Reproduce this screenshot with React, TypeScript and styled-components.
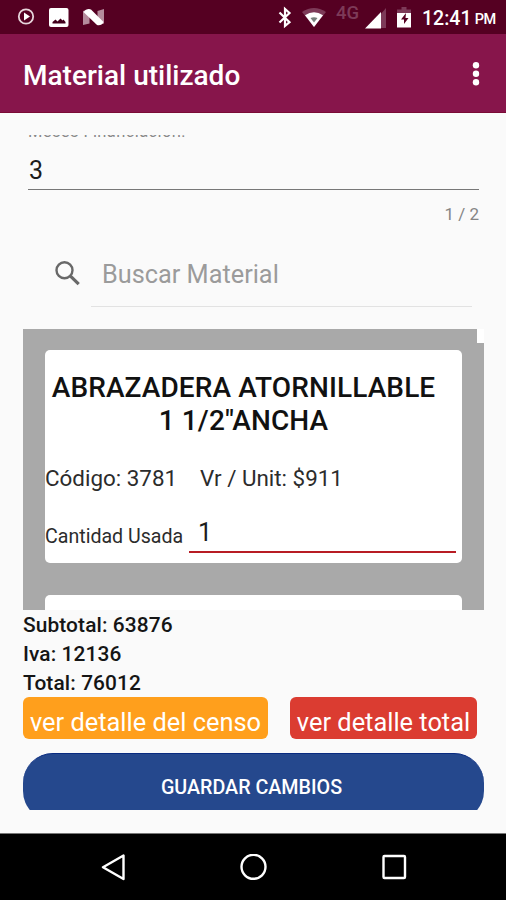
import React from 'react';
import styled, { createGlobalStyle } from 'styled-components';

const GlobalStyle = createGlobalStyle`
  * { box-sizing: border-box; }
  body { margin: 0; background: #fafafa; font-family: Roboto, sans-serif; color: #1c1c1c; }
  svg { display: block; flex: none; }
`;

const Screen = styled.div`
  width: 506px;
  height: 900px;
  display: flex;
  flex-direction: column;
  overflow: hidden;
  background: #fafafa;
  white-space: nowrap;
`;

const StatusBar = styled.header`
  height: 34px;
  flex: none;
  display: flex;
  justify-content: space-between;
  background: #550022;
  color: #fff;
  padding: 0 10px 0 17px;
`;

const StatusGroup = styled.div<{ $gap: number }>`
  display: flex;
  gap: ${p => p.$gap}px;
  height: 34px;
`;

const Network = styled.span`
  width: 19px;
  font-size: 18.5px;
  font-weight: 500;
  line-height: 26px;
  color: #7d3a58;
`;

const Clock = styled.time`
  width: 74px;
  font-size: 19.5px;
  font-weight: 500;
  line-height: 38px;
  display: flex;
  justify-content: space-between;
`;

const Meridiem = styled.small`
  font-size: 14.5px;
  letter-spacing: -0.3px;
  line-height: 40px;
`;

const AppBar = styled.div`
  height: 79px;
  flex: none;
  display: flex;
  align-items: center;
  justify-content: space-between;
  padding: 0 26px 0 23px;
  background: #87154b;
  border-bottom: 1px solid #7a0b35;
`;

const Title = styled.h1`
  margin: 5px 0 0;
  font-size: 28px;
  font-weight: 500;
  line-height: 32px;
  color: #fff;
`;

const Content = styled.main`
  height: 720px;
  flex: none;
  padding: 22px 22px 0 23px;
`;

const TermField = styled.section`
  margin: 0 5px;
  height: 92px;
`;

const ClippedLabel = styled.div`
  height: 2px;
  margin-bottom: 1px;
  overflow: hidden;
  display: flex;
  align-items: flex-end;
  font-size: 16.5px;
  line-height: 11px;
  letter-spacing: 0.4px;
  color: #888;
`;

const TermValue = styled.div`
  height: 52px;
  padding: 17px 0 0 1px;
  font-size: 25px;
  line-height: 32px;
  border-bottom: 1.5px solid #777;
`;

const Counter = styled.div`
  padding-top: 13px;
  text-align: right;
  font-size: 17px;
  line-height: 22px;
  color: #858585;
`;

const Search = styled.label`
  height: 80px;
  margin: 0 12px 0 31px;
  display: flex;
  gap: 20px;
`;

const SearchText = styled.span`
  flex: 1;
  height: 80px;
  margin-left: -10px;
  padding: 32px 0 0 11px;
  font-size: 25.3px;
  line-height: 32px;
  color: #9b9b9b;
  border-bottom: 1px solid #e2e2e2;
`;

const MaterialList = styled.section`
  position: relative;
  margin-top: 22px;
  height: 281px;
  overflow: hidden;
  background: #a9a9a9;
  padding: 21px 22px 0;
`;

const ScrollCorner = styled.i`
  position: absolute;
  right: 0;
  top: 0;
  width: 7px;
  height: 14px;
  background: #fff;
`;

const Card = styled.article`
  height: 213px;
  margin-bottom: 32px;
  border-radius: 5px;
  background: #fff;
  overflow: hidden;
`;

const CardTitle = styled.h2`
  margin: 21px 20px 0 0;
  text-align: center;
  font-size: 28px;
  font-weight: 500;
  letter-spacing: 0.1px;
  line-height: 33px;
  color: #111;
`;

const Facts = styled.div`
  display: flex;
  gap: 23px;
  margin-top: 26px;
  font-size: 22.4px;
  line-height: 30px;
  color: #2c2c2c;
`;

const Quantity = styled.div`
  display: flex;
  height: 40px;
  margin-top: 20px;
  padding-right: 6px;
`;

const QuantityLabel = styled.span`
  width: 144px;
  font-size: 19.6px;
  line-height: 48px;
  color: #2c2c2c;
`;

const QuantityValue = styled.span`
  flex: 1;
  padding-left: 9px;
  font-size: 25px;
  line-height: 40px;
  border-bottom: 2px solid #b81c24;
`;

const Totals = styled.div`
  padding-top: 1px;
  height: 87px;
  font-size: 20.9px;
  font-weight: 500;
  letter-spacing: 0.1px;
  line-height: 29px;
  color: #151515;
`;

const DetailActions = styled.div`
  display: flex;
  gap: 22px;
`;

const DetailButton = styled.button<{ $color: string; $width: number }>`
  width: ${p => p.$width}px;
  height: 42px;
  border: 0;
  border-radius: 6px;
  background: ${p => p.$color};
  color: #fff;
  font: 400 25.4px/32px Roboto, sans-serif;
  padding: 9px 0 1px;
`;

const SaveClip = styled.div`
  margin-top: 14px;
  height: 57px;
  overflow: hidden;
`;

const SaveButton = styled.button`
  width: 461px;
  height: 68px;
  padding: 1px 4px 0 0;
  border: 0;
  border-top: 1px solid #082a80;
  border-radius: 30px;
  background: #25488d;
  color: #fff;
  font: 500 19.7px/24px Roboto, sans-serif;
`;

const NavBar = styled.nav`
  height: 67px;
  flex: none;
  display: flex;
  justify-content: space-between;
  padding: 20px 99px 0 100px;
  background: #000;
  border-top: 1px solid #777;
`;

function PlayIcon() {
  return (
    <svg width="18" height="34" fill="none" stroke="#e7d5dc">
      <circle cx="9" cy="16.5" r="7.2" strokeWidth="1.8" />
      <path d="M7 12.5v8l6-4z" fill="#fff" stroke="none" />
    </svg>
  );
}

function PictureIcon() {
  return (
    <svg width="20" height="34">
      <rect y="8" width="19.5" height="19" rx="2" fill="#fff" />
      <path d="M3.500 23.500V22L6.500 19.500 8.500 21.500 11.500 18.500l2 2 1-1 2 2.500v1.500z" fill="#42001c" />
    </svg>
  );
}

function NougatIcon() {
  return (
    <svg width="22" height="34">
      <path d="M0 11 6.500 9v14.500L0 25zM14.500 11 21 9v14.500L14.500 25z" fill="#b58b9c" />
      <path d="M.500 12Q3.500 8 8 9.500L20.500 22Q18.500 26 14 25L1.500 13z" fill="#fff" />
    </svg>
  );
}

function BluetoothIcon() {
  return (
    <svg width="14" height="34" fill="none" stroke="#fff" strokeWidth="2.200">
      <path d="m1.500 12.500 10 9.700-4.500 3.800V9l4.500 4L1.500 22.500" />
    </svg>
  );
}

function WifiIcon() {
  return (
    <svg width="24" height="34">
      <path d="M0 12Q12 4 24 12L12 27z" fill="#7d3a58" />
      <path d="M3 15.200Q12 9.500 21 15.200L12 27z" fill="#fff" />
      <path d="M8.500 18q3.500-1.500 7 0L12 22.500z" fill="#777f7c" />
    </svg>
  );
}

function SignalIcon() {
  return (
    <svg width="22" height="34">
      <path d="M15 15 21 8v20h-6z" fill="#7d3a58" />
      <path d="M0 28.500 16 12v16.500z" fill="#fff" />
    </svg>
  );
}

function BatteryIcon() {
  return (
    <svg width="15" height="34">
      <path d="M0 14V9.500h4.500V7h5v2.500H14V14z" fill="#7d3a58" />
      <path d="M0 13h14V27.500H0z" fill="#fff" />
      <path d="m9 13-5 6.500h3v4.500l4.500-6h-3z" fill="#550022" />
    </svg>
  );
}

function MoreIcon() {
  return (
    <svg width="8" height="26" fill="#fff">
      <circle cx="4" cy="5.200" r="3.200" />
      <circle cx="4" cy="13.700" r="3.200" />
      <circle cx="4" cy="22.200" r="3.200" />
    </svg>
  );
}

function SearchIcon() {
  return (
    <svg width="27" height="80" fill="none" stroke="#686868">
      <circle cx="10.500" cy="43.200" r="8" strokeWidth="2.400" />
      <path d="m16.500 49.200 8.200 8" strokeWidth="3.200" />
    </svg>
  );
}

const totals = [
  ['Subtotal', 63876],
  ['Iva', 12136],
  ['Total', 76012],
];

export default function App() {
  return (
    <Screen>
      <GlobalStyle />
      <StatusBar>
        <StatusGroup $gap={14}>
          <PlayIcon />
          <PictureIcon />
          <NougatIcon />
        </StatusGroup>
        <StatusGroup $gap={10}>
          <BluetoothIcon />
          <WifiIcon />
          <Network>4G</Network>
          <SignalIcon />
          <BatteryIcon />
          <Clock>12:41<Meridiem>PM</Meridiem></Clock>
        </StatusGroup>
      </StatusBar>
      <AppBar>
        <Title>Material utilizado</Title>
        <MoreIcon />
      </AppBar>
      <Content>
        <TermField>
          <ClippedLabel>Meses Financiación:</ClippedLabel>
          <TermValue>3</TermValue>
          <Counter>1 / 2</Counter>
        </TermField>
        <Search>
          <SearchIcon />
          <SearchText>Buscar Material</SearchText>
        </Search>
        <MaterialList>
          <ScrollCorner />
          <Card>
            <CardTitle>ABRAZADERA ATORNILLABLE<br />1 1/2"ANCHA</CardTitle>
            <Facts>
              <span>Código: 3781</span>
              <span>Vr / Unit: $911</span>
            </Facts>
            <Quantity>
              <QuantityLabel>Cantidad Usada</QuantityLabel>
              <QuantityValue>1</QuantityValue>
            </Quantity>
          </Card>
          <Card />
        </MaterialList>
        <Totals>
          {totals.map(([name, amount]) => <div key={name}>{name}: {amount}</div>)}
        </Totals>
        <DetailActions>
          <DetailButton $color="#ff9f1c" $width={245}>ver detalle del censo</DetailButton>
          <DetailButton $color="#db3c31" $width={187}>ver detalle total</DetailButton>
        </DetailActions>
        <SaveClip>
          <SaveButton>GUARDAR CAMBIOS</SaveButton>
        </SaveClip>
      </Content>
      <NavBar>
        <svg width="26" height="28" fill="none" stroke="#fff" strokeWidth="2.400" strokeLinejoin="round">
          <path d="M23.500 1.500v23.500L3 13.200z" />
        </svg>
        <svg width="28" height="28" fill="none" stroke="#fff" strokeWidth="2.400">
          <circle cx="13.500" cy="12.800" r="12" />
        </svg>
        <svg width="26" height="28" fill="none" stroke="#fff" strokeWidth="2.400">
          <rect x="2.500" y="2" width="21.500" height="22" rx="1" />
        </svg>
      </NavBar>
    </Screen>
  );
}
